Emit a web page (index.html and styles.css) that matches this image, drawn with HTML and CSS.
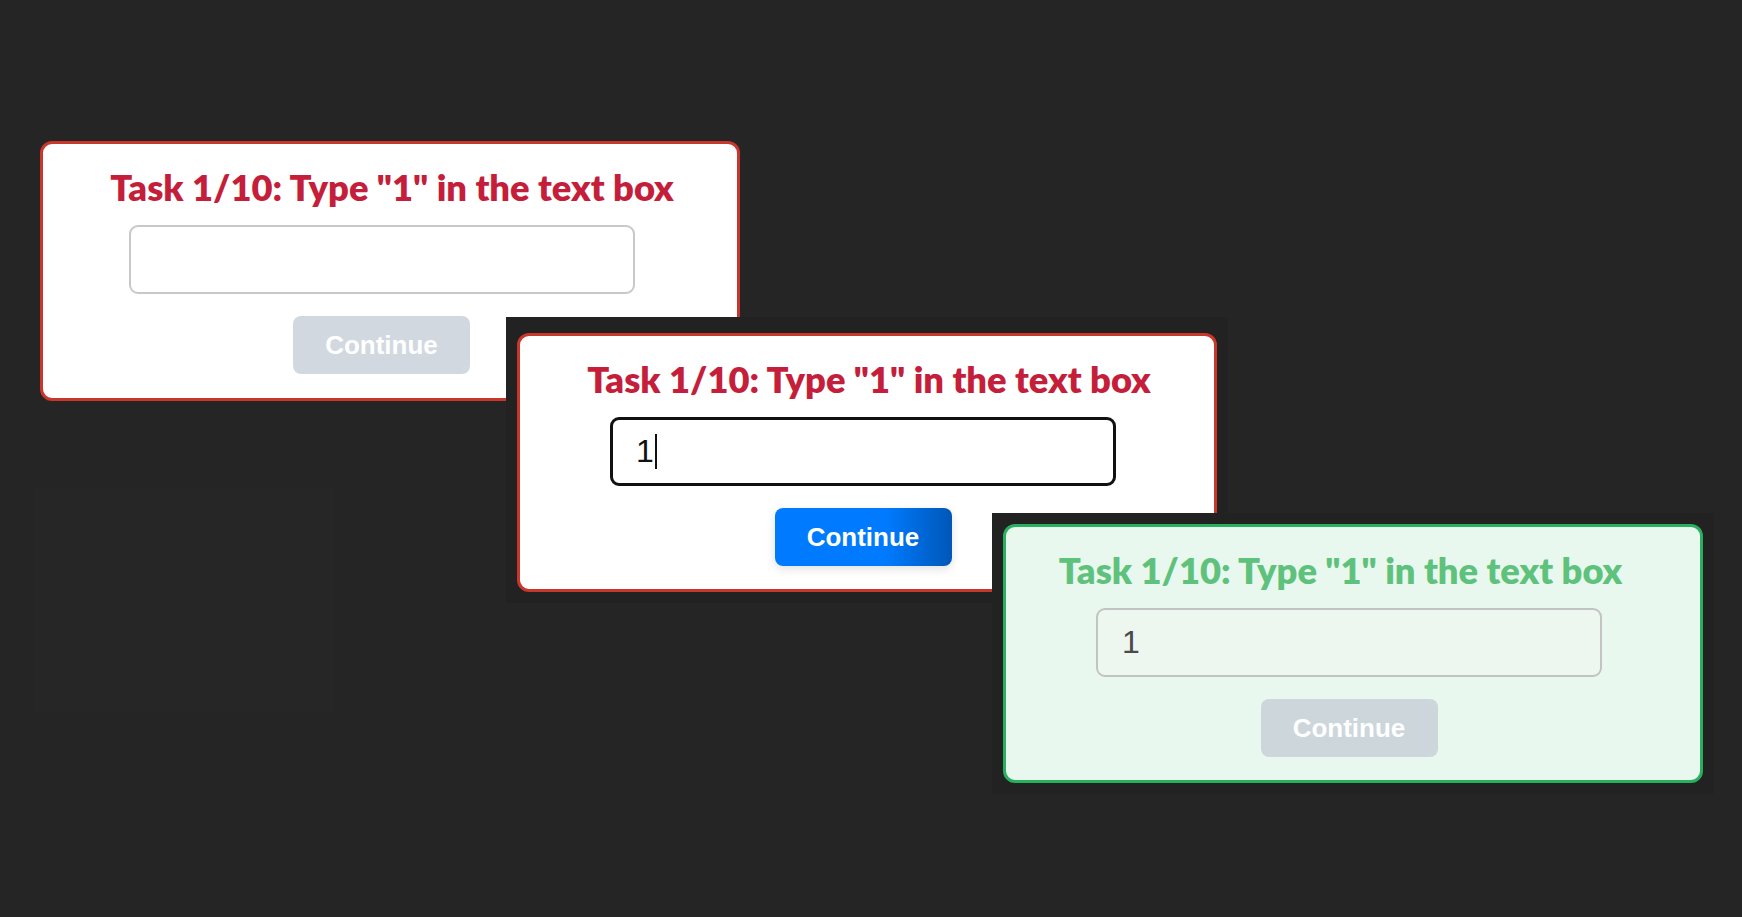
FILE: index.html
```html
<!DOCTYPE html>
<html lang="en">
<head>
<meta charset="utf-8">
<title>Task cards</title>
<link rel="stylesheet" href="styles.css">
</head>
<body>
<main class="stage">
  <div class="ghost"></div>
  <section class="shot shot-1">
    <div class="card card-red card-first">
      <h2 class="title title-red">Task 1/10: Type "1" in the text box</h2>
      <div class="field field-empty"></div>
      <button class="btn btn-disabled" type="button">Continue</button>
    </div>
  </section>
  <section class="shot shot-2">
    <div class="card card-red">
      <h2 class="title title-red">Task 1/10: Type "1" in the text box</h2>
      <div class="field field-focus"><span class="value">1</span><span class="caret"></span></div>
      <button class="btn btn-active" type="button">Continue</button>
    </div>
  </section>
  <section class="shot shot-3">
    <div class="card card-green">
      <h2 class="title title-green">Task 1/10: Type "1" in the text box</h2>
      <div class="field field-done"><span class="value">1</span></div>
      <button class="btn btn-disabled-green" type="button">Continue</button>
    </div>
  </section>
</main>
</body>
</html>
```

FILE: styles.css
```css
html, body {
  margin: 0;
  padding: 0;
  background: #252525;
}

.stage {
  position: relative;
  width: 1742px;
  height: 917px;
  overflow: hidden;
  background: #252525;
}

.ghost {
  position: absolute;
  left: 34px;
  top: 488px;
  width: 300px;
  height: 224px;
  background: #262626;
}

.shot {
  position: absolute;
  background: #222222;
}

.shot-1 {
  left: 40px;
  top: 141px;
  background: transparent;
}

.shot-2 {
  left: 506px;
  top: 317px;
  padding: 16px 11px 11px 11px;
}

.shot-3 {
  left: 992px;
  top: 513px;
  padding: 11px;
}

.card {
  box-sizing: border-box;
  width: 700px;
  height: 259px;
  border: 3px solid #c9372c;
  border-radius: 12px;
  background: #ffffff;
  display: flex;
  flex-direction: column;
  align-items: center;
  padding: 22px 8px 0 0;
}

.card-first {
  height: 260px;
  padding-right: 17px;
}

.card-green {
  background: #e9f8ef;
  border-color: #29b05f;
}

.title {
  margin: 0 0 0 12px;
  font-family: "Lato", "Noto Sans", sans-serif;
  font-weight: 800;
  font-size: 36.3px;
  line-height: 42px;
  white-space: nowrap;
}

.card-first .title {
  margin-left: 21px;
}

.title-red {
  color: #c41e3a;
}

.title-green {
  color: #5fc27c;
  margin-left: -17px;
}

.field {
  box-sizing: border-box;
  width: 506px;
  height: 69px;
  margin-top: 17px;
  border-radius: 9px;
  display: flex;
  align-items: center;
  padding-left: 23px;
  font-family: "Liberation Sans", Arial, sans-serif;
  font-size: 32px;
}

.field-empty {
  border: 2px solid #c8c8c8;
  background: #ffffff;
}

.field-focus {
  border: 3px solid #111111;
  background: #ffffff;
  color: #111111;
}

.field-done {
  border: 2px solid #c2c4c3;
  background: #eef6f0;
  color: #4a4a4a;
  padding-left: 24px;
}

.caret {
  display: inline-block;
  width: 2px;
  height: 35px;
  margin-left: 1px;
  background: #111111;
}

.btn {
  box-sizing: border-box;
  width: 177px;
  height: 58px;
  margin-top: 22px;
  border: none;
  border-radius: 8px;
  font-family: "Liberation Sans", Arial, sans-serif;
  font-weight: 700;
  font-size: 26px;
  color: #ffffff;
  padding: 0;
}

.btn-disabled {
  background: #d1d8e0;
}

.btn-disabled-green {
  background: #ccd6db;
}

.btn-active {
  background: linear-gradient(90deg, #007bff 0%, #007bff 62%, #0057b8 100%);
  box-shadow: 0 3px 10px rgba(0, 0, 0, 0.12);
}
```
